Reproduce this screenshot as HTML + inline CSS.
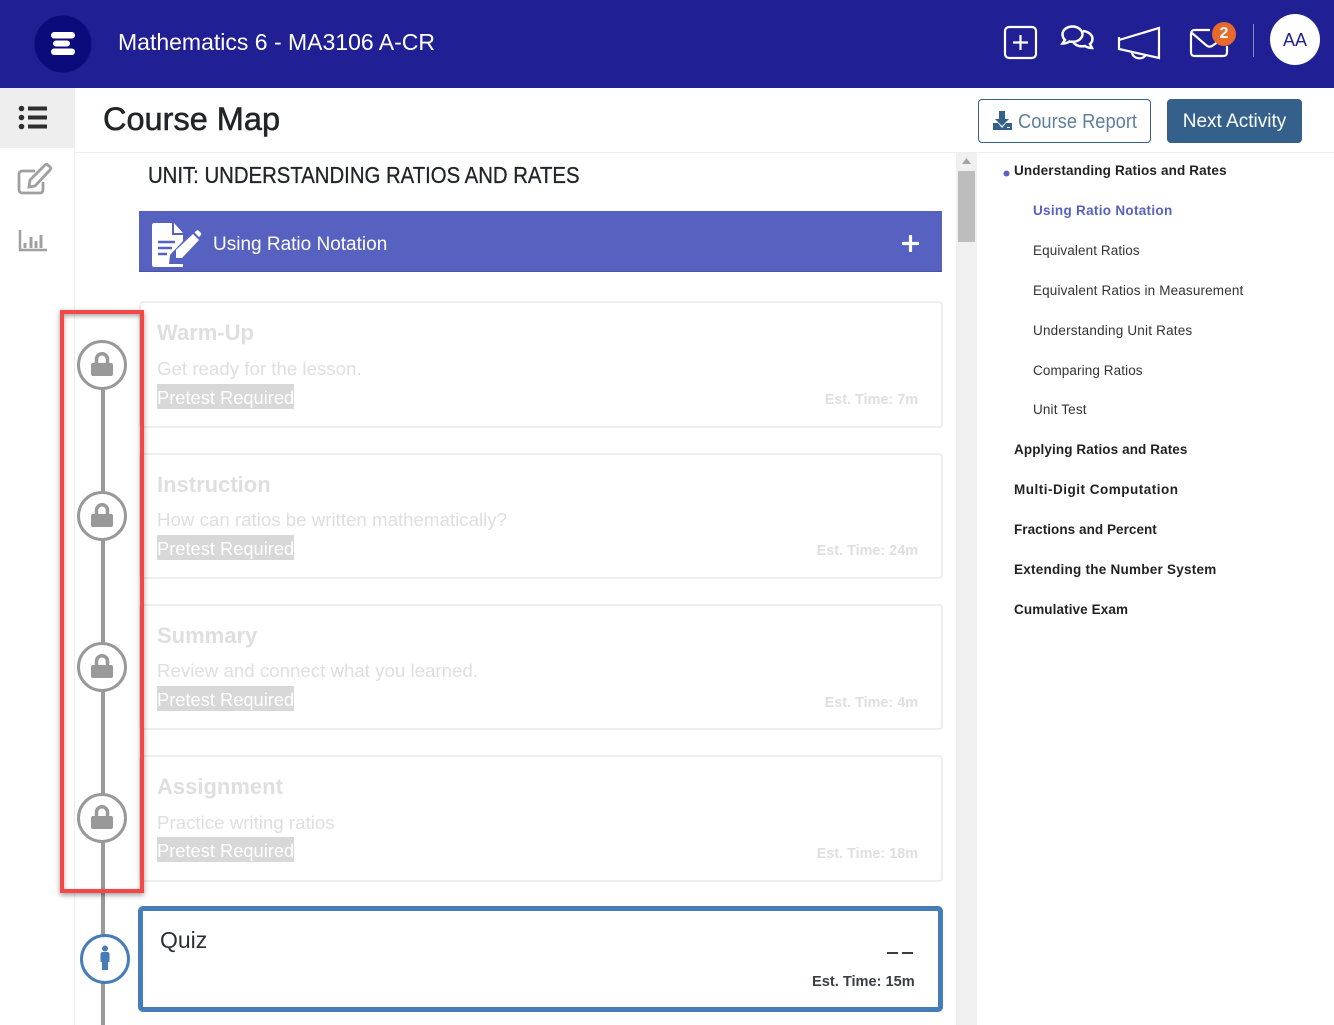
<!DOCTYPE html>
<html lang="en"><head><meta charset="utf-8"><title>Course Map</title>
<style>
*{box-sizing:border-box}
html,body{margin:0;padding:0;width:1334px;height:1025px;overflow:hidden;background:#fff;font-family:"Liberation Sans",sans-serif;color:#212529}
.a{position:absolute;white-space:nowrap}
.card{position:absolute;left:139px;width:804px;border:2px solid #eee;border-radius:4px;background:#fff}
.h{position:absolute;left:157px;font-size:22px;font-weight:bold;color:#dfdfdf;white-space:nowrap}
.d{position:absolute;left:157px;font-size:18.700px;color:#dfdfdf;white-space:nowrap}
.p{position:absolute;left:157px;width:137px;height:25px;background:#d8d8d8;color:#fff;font-size:18.300px;line-height:27px;white-space:nowrap;overflow:hidden}
.t{position:absolute;right:416px;font-size:14.400px;font-weight:bold;color:#dfdfdf;white-space:nowrap}
.c{position:absolute;left:77px;width:50px;height:50px;border:3.500px solid #999;border-radius:50%;background:#fff}
.r{position:absolute;font-size:13.500px;white-space:nowrap;color:#333;line-height:16px;letter-spacing:.15px}
.b{font-weight:bold;left:1014px;color:#222}
.s{left:1033px}
</style></head><body>

<div class="a" style="left:0;top:0;width:1334px;height:88px;background:#202094"></div>
<svg class="a" style="left:34px;top:15px" width="58" height="58" viewBox="0 0 58 58"><circle cx="29" cy="29" r="28.500" fill="#0b0b7c"/><rect x="17" y="17" width="24" height="6.500" rx="3.200" fill="#fff"/><rect x="19" y="25.500" width="17" height="6" rx="3" fill="#fff"/><rect x="17" y="33.500" width="24" height="6.500" rx="3.200" fill="#fff"/></svg>
<div class="a" style="left:118px;top:27px;font-size:23px;line-height:30px;color:#fff">Mathematics 6 - MA3106 A-CR</div>

<svg class="a" style="left:1000px;top:10px" width="170" height="65" viewBox="0 0 170 65" fill="none" stroke="#fff" stroke-width="2.200">
<rect x="5" y="17" width="31" height="31" rx="4"/><path d="M20.500 25v15M13 32.500h15"/>
<path stroke-width="2.500" d="M72.500 16.500c-5.500 0-10 3.400-10 8 0 2.200 1 4 2.500 5.400l-2.500 3.600c3 0 5.500-1 7-2 1 .2 2 .3 3 .3 5.500 0 10-3.400 10-7.500s-4.500-7.800-10-7.800z"/>
<path stroke-width="2.500" d="M83 21c5 .5 9.500 3.500 9.500 8 0 2-1 3.700-2.500 5l2 4c-3 0-5.500-1-7-2-1 .2-2 .3-3 .3-4 0-7.500-1.800-9-4.300"/>
<path d="M119 30l40-12v30l-40-9zM119 27v13M132 41c-1 8 12 10 14 3"/>
</svg>
<svg class="a" style="left:1170px;top:10px" width="164" height="65" viewBox="0 0 164 65">
<path d="M40 20H25c-3 0-4 1-4 4v18c0 3 1 4 4 4h28c3 0 4-1 4-4v-6M22 23l14 12c2 2 4 2 6 1l7-5" fill="none" stroke="#fff" stroke-width="2.200"/>
<circle cx="54" cy="24" r="12" fill="#e66a2c"/>
<rect x="83" y="14" width="1" height="33" fill="#8c8cb8"/>
</svg>
<div class="a" style="left:1212px;top:22px;width:24px;text-align:center;color:#fff;font-weight:bold;font-size:16px;line-height:24px">2</div>
<div class="a" style="left:1270px;top:14px;width:50px;height:51px;border-radius:50%;background:#fff;color:#202094;text-align:center;font-size:18px;line-height:53px">AA</div>

<div class="a" style="left:0;top:88px;width:75px;height:937px;border-right:1px solid #eee;background:#fff"></div>
<div class="a" style="left:0;top:88px;width:74px;height:60px;background:#eee"></div>
<svg class="a" style="left:0;top:90px" width="75" height="180" viewBox="0 0 75 180" fill="none">
<g fill="#2f2f2f"><circle cx="21.500" cy="18.500" r="2.800"/><circle cx="21.500" cy="27.500" r="2.800"/><circle cx="21.500" cy="36.500" r="2.800"/><rect x="28" y="16.500" width="19" height="4"/><rect x="28" y="25.500" width="19" height="4"/><rect x="28" y="34.500" width="19" height="4"/></g>
<path d="M35 81H23c-3 0-4 1-4 3v15c0 3 1 4 4 4h17c2 0 3-1 3-4V92" stroke="#a0a0a0" stroke-width="2.800"/>
<path d="M29 97l1-7 15-15c1-1 2-1 3 0l2 2c1 1 1 2 0 3L35 96z" stroke="#a0a0a0" stroke-width="2.800"/>
<path d="M20 140v20h27" stroke="#a0a0a0" stroke-width="2.500"/><path d="M25 158v-5M31 158v-11M36 158v-7M41 158v-13" stroke="#a0a0a0" stroke-width="3"/>
</svg>

<div class="a" style="left:75px;top:152px;width:1259px;height:1px;background:#eee"></div>
<div class="a" style="left:103px;top:97px;font-size:32.500px;line-height:44px;color:#212529;-webkit-text-stroke:.55px #212529">Course Map</div>

<div class="a" style="left:978px;top:99px;width:173px;height:44px;border:1px solid #35608c;border-radius:4px;background:#fff"></div>
<svg class="a" style="left:990px;top:108px" width="26" height="26" viewBox="0 0 26 26"><path d="M9 3h6v8h4l-7 7-7-7h4z" fill="#35608c"/><path d="M3 15h5l4 5 4-5h6v7H3z" fill="#35608c"/><rect x="17" y="19" width="3" height="1" fill="#fff"/></svg>
<div class="a" style="left:1018px;top:109px;font-size:20px;line-height:27px;color:#5f7f9e;transform:scaleX(.915);transform-origin:left">Course Report</div>
<div class="a" style="left:1167px;top:99px;width:135px;height:44px;border-radius:4px;background:#35608c;color:#fff;text-align:center;font-size:19px;line-height:46px">Next Activity</div>

<div class="a" style="left:956px;top:153px;width:21px;height:872px;background:#f0f0f0"></div>
<div class="a" style="left:958px;top:171px;width:17px;height:71px;background:#bdbdbd"></div>
<svg class="a" style="left:961px;top:158px" width="11" height="7"><path d="M5.500 0L10 6H1z" fill="#a3a3a3"/></svg>

<div class="a" style="left:148px;top:160px;font-size:23px;line-height:30px;color:#212529;transform:scaleX(.884);transform-origin:left;-webkit-text-stroke:.3px #212529">UNIT: UNDERSTANDING RATIOS AND RATES</div>

<div class="a" style="left:139px;top:211px;width:803px;height:61px;background:#5661c0;border-bottom:1px solid #4a53a6"></div>
<svg class="a" style="left:150px;top:221px" width="52" height="48" viewBox="0 0 52 48">
<path d="M2 4c0-1 1-2 2-2h18v12h11v6L20 34l-1 9h14v3H4c-1 0-2-1-2-2z" fill="#fff"/><path d="M24 2l9 10h-9z" fill="#fff"/>
<path d="M8 21h17M8 27h14M8 33h9" stroke="#5661c0" stroke-width="2.500"/>
<path d="M26 37v-8L43 13l6 6-17 18z" fill="#fff"/><path d="M44.500 11.500l1.500-1.500c1-1 2-1 3 0l1.500 1.500c1 1 1 2 0 3l-1.500 1.500z" fill="#fff"/>
</svg>
<div class="a" style="left:213px;top:232px;font-size:19px;line-height:26px;color:#fff">Using Ratio Notation</div>
<svg class="a" style="left:902px;top:235px" width="17" height="17"><path d="M8.500 1v15M1 8.500h15" stroke="#fff" stroke-width="3.200" stroke-linecap="round"/></svg>

<div class="card" style="top:301px;height:127px"></div>
<div class="card" style="top:453px;height:126px"></div>
<div class="card" style="top:604px;height:126px"></div>
<div class="card" style="top:755px;height:127px"></div>

<div class="h" style="top:320px">Warm-Up</div><div class="d" style="top:358px">Get ready for the lesson.</div><div class="p" style="top:384px">Pretest Required</div><div class="t" style="top:392px">Est. Time: 7m</div>
<div class="h" style="top:472px">Instruction</div><div class="d" style="top:509px">How can ratios be written mathematically?</div><div class="p" style="top:535px">Pretest Required</div><div class="t" style="top:543px">Est. Time: 24m</div>
<div class="h" style="top:623px">Summary</div><div class="d" style="top:660px">Review and connect what you learned.</div><div class="p" style="top:686px">Pretest Required</div><div class="t" style="top:695px">Est. Time: 4m</div>
<div class="h" style="top:774px">Assignment</div><div class="d" style="top:812px">Practice writing ratios</div><div class="p" style="top:837px">Pretest Required</div><div class="t" style="top:846px">Est. Time: 18m</div>

<div class="a" style="left:138px;top:906px;width:805px;height:106px;border:5px solid #467cb8;border-radius:5px;background:#fff"></div>
<div class="a" style="left:160px;top:925px;font-size:23px;line-height:30px;color:#2b2f36">Quiz</div>
<div class="a" style="left:887px;top:952px;width:11px;height:2px;background:#3a3d44"></div>
<div class="a" style="left:902px;top:952px;width:11px;height:2px;background:#3a3d44"></div>
<div class="a" style="left:812px;top:973px;font-size:14.600px;line-height:18px;font-weight:bold;color:#3a3d44">Est. Time: 15m</div>

<div class="a" style="left:101px;top:365px;width:3.500px;height:660px;background:#999"></div>
<div class="c" style="top:340px"></div><div class="c" style="top:491px"></div><div class="c" style="top:642px"></div><div class="c" style="top:793px"></div>
<svg class="a" style="left:90px;top:351px" width="24" height="26"><path d="M6.500 14V8.300a5.500 5.500 0 0 1 11 0V14" fill="none" stroke="#999" stroke-width="3.500"/><rect x="1" y="12" width="22" height="13" rx="2" fill="#999"/></svg>
<svg class="a" style="left:90px;top:502px" width="24" height="26"><path d="M6.500 14V8.300a5.500 5.500 0 0 1 11 0V14" fill="none" stroke="#999" stroke-width="3.500"/><rect x="1" y="12" width="22" height="13" rx="2" fill="#999"/></svg>
<svg class="a" style="left:90px;top:653px" width="24" height="26"><path d="M6.500 14V8.300a5.500 5.500 0 0 1 11 0V14" fill="none" stroke="#999" stroke-width="3.500"/><rect x="1" y="12" width="22" height="13" rx="2" fill="#999"/></svg>
<svg class="a" style="left:90px;top:804px" width="24" height="26"><path d="M6.500 14V8.300a5.500 5.500 0 0 1 11 0V14" fill="none" stroke="#999" stroke-width="3.500"/><rect x="1" y="12" width="22" height="13" rx="2" fill="#999"/></svg>

<div class="a" style="left:80px;top:934px;width:50px;height:50px;border:3.500px solid #467cb8;border-radius:50%;background:#fff"></div>
<svg class="a" style="left:99px;top:945px" width="12" height="26"><circle cx="6" cy="3.500" r="3" fill="#467cb8"/><path d="M1.500 9c0-1 1-2 2-2h5c1 0 2 1 2 2v8H9v8H3v-8H1.500z" fill="#467cb8"/></svg>

<div class="a" style="left:60px;top:310px;width:84px;height:583px;border:4px solid #f44848;box-shadow:0 2px 5px rgba(0,0,0,.4),inset 0 2px 5px rgba(0,0,0,.35)"></div>

<svg class="a" style="left:1003px;top:170px" width="7" height="7"><circle cx="3.500" cy="3.500" r="3" fill="#5661c0"/></svg>
<div class="r b" style="top:163px;letter-spacing:.14px">Understanding Ratios and Rates</div>
<div class="r s" style="top:203px;font-weight:bold;color:#5661c0;letter-spacing:.3px">Using Ratio Notation</div>
<div class="r s" style="top:243px;letter-spacing:.1px">Equivalent Ratios</div>
<div class="r s" style="top:283px">Equivalent Ratios in Measurement</div>
<div class="r s" style="top:323px;letter-spacing:.2px">Understanding Unit Rates</div>
<div class="r s" style="top:363px;letter-spacing:.1px">Comparing Ratios</div>
<div class="r s" style="top:402px">Unit Test</div>
<div class="r b" style="top:442px;letter-spacing:.1px">Applying Ratios and Rates</div>
<div class="r b" style="top:482px;letter-spacing:.5px">Multi-Digit Computation</div>
<div class="r b" style="top:522px;letter-spacing:.05px">Fractions and Percent</div>
<div class="r b" style="top:562px;letter-spacing:.25px">Extending the Number System</div>
<div class="r b" style="top:602px;letter-spacing:.1px">Cumulative Exam</div>
</body></html>
